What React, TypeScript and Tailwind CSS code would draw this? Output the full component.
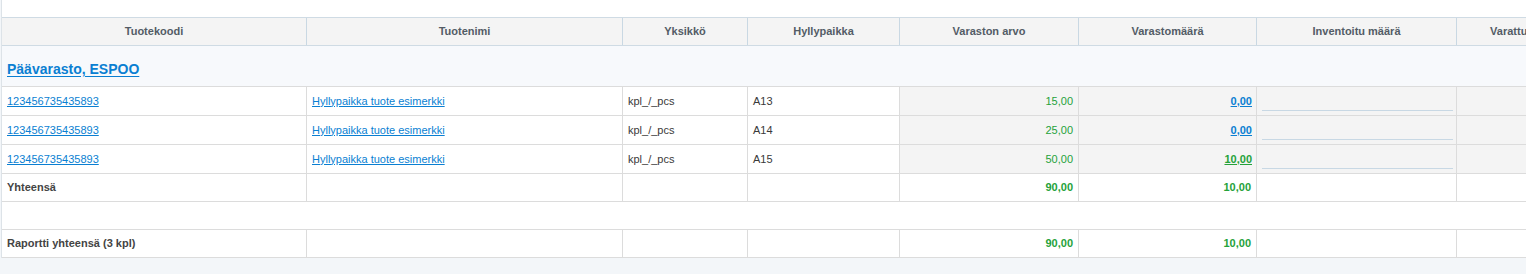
import React from "react";

const cols = "grid grid-cols-[305px_316px_125px_152px_179px_178px_200px_140px]";
const font = { fontFamily: '"Liberation Sans", Arial, sans-serif' };

const headers = [
  "Tuotekoodi",
  "Tuotenimi",
  "Yksikkö",
  "Hyllypaikka",
  "Varaston arvo",
  "Varastomäärä",
  "Inventoitu määrä",
  "Varattu määrä",
];

const rows = [
  { code: "123456735435893", name: "Hyllypaikka tuote esimerkki", unit: "kpl_/_pcs", shelf: "A13", value: "15,00", qty: "0,00", green: false },
  { code: "123456735435893", name: "Hyllypaikka tuote esimerkki", unit: "kpl_/_pcs", shelf: "A14", value: "25,00", qty: "0,00", green: false },
  { code: "123456735435893", name: "Hyllypaikka tuote esimerkki", unit: "kpl_/_pcs", shelf: "A15", value: "50,00", qty: "10,00", green: true },
];

function TotalRow({ label }: { label: string }) {
  return (
    <div className={`${cols} h-[28px] border-b border-[#dcdcdc] bg-white text-[11px]`}>
      <div className="flex items-center border-r border-[#dcdcdc] px-[5px] font-bold text-[#444]">{label}</div>
      <div className="border-r border-[#dcdcdc]" />
      <div className="border-r border-[#dcdcdc]" />
      <div className="border-r border-[#dcdcdc]" />
      <div className="flex items-center justify-end border-r border-[#dcdcdc] px-[5px] font-bold text-[#25a23a]">90,00</div>
      <div className="flex items-center justify-end border-r border-[#dcdcdc] px-[5px] font-bold text-[#25a23a]">10,00</div>
      <div className="border-r border-[#dcdcdc]" />
      <div className="border-r border-[#dcdcdc]" />
    </div>
  );
}

export default function App() {
  return (
    <div className="h-[274px] w-full overflow-hidden bg-[#f3f6f9]" style={font}>
      <div className="ml-px w-max border-l border-[#dde3e8] bg-white pt-[17px]">
        {/* Header */}
        <div className={`${cols} h-[29px] border-y border-[#cfdbe4] bg-[#f4f4f4] text-[11px] font-bold text-[#535c66]`}>
          {headers.map((h) => (
            <div key={h} className="flex items-center justify-center border-r border-[#c9d8e3]">
              {h}
            </div>
          ))}
        </div>

        {/* Group row */}
        <div className="flex h-[41px] items-center border-b border-[#dcdcdc] bg-[#f7f9fc] px-[5px] pt-[6px]">
          <a href="#" className="text-[14px] font-bold text-[#0a7fd2] underline underline-offset-[2px]">
            Päävarasto, ESPOO
          </a>
        </div>

        {/* Data rows */}
        {rows.map((r, i) => (
          <div key={i} className={`${cols} h-[29px] border-b border-[#dcdcdc] text-[11px] text-[#3a3a3a]`}>
            <div className="flex items-center border-r border-[#dcdcdc] bg-white px-[5px]">
              <a href="#" className="text-[#0a7fd2] underline">{r.code}</a>
            </div>
            <div className="flex items-center border-r border-[#dcdcdc] bg-white px-[5px]">
              <a href="#" className="text-[#0a7fd2] underline">{r.name}</a>
            </div>
            <div className="flex items-center border-r border-[#dcdcdc] bg-white px-[5px]">{r.unit}</div>
            <div className="flex items-center border-r border-[#dcdcdc] bg-white px-[5px]">{r.shelf}</div>
            <div className="flex items-center justify-end border-r border-[#dcdcdc] bg-[#f4f4f4] px-[5px] text-[#25a23a]">{r.value}</div>
            <div className="flex items-center justify-end border-r border-[#dcdcdc] bg-[#f4f4f4] px-[4px]">
              <a
                href="#"
                className={`font-bold underline ${r.green ? "text-[#25a23a]" : "text-[#0a7fd2]"}`}
              >
                {r.qty}
              </a>
            </div>
            <div className="flex items-end border-r border-[#dcdcdc] bg-[#f4f4f4] pb-[4px] pl-[5px] pr-[3px]">
              <input
                className="h-[20px] w-full border-b border-[#c8d8e4] bg-transparent outline-none"
                aria-label="Inventoitu määrä"
              />
            </div>
            <div className="border-r border-[#dcdcdc] bg-[#f4f4f4]" />
          </div>
        ))}

        <TotalRow label="Yhteensä" />
        <div className="h-[28px] border-b border-[#dcdcdc] bg-white" />
        <TotalRow label="Raportti yhteensä (3 kpl)" />
      </div>
    </div>
  );
}
